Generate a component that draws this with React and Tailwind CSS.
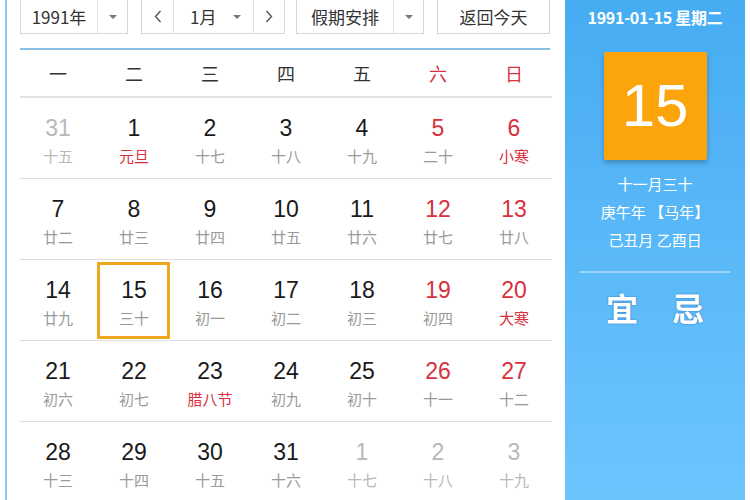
import React from "react";

const weekdays = ["一", "二", "三", "四", "五", "六", "日"];

// [day, lunar, kind] kind: o = other month, h = holiday (red lunar)
const weeks = [
  [["31", "十五", "o"], ["1", "元旦", "h"], ["2", "十七"], ["3", "十八"], ["4", "十九"], ["5", "二十"], ["6", "小寒", "h"]],
  [["7", "廿二"], ["8", "廿三"], ["9", "廿四"], ["10", "廿五"], ["11", "廿六"], ["12", "廿七"], ["13", "廿八"]],
  [["14", "廿九"], ["15", "三十", "s"], ["16", "初一"], ["17", "初二"], ["18", "初三"], ["19", "初四"], ["20", "大寒", "h"]],
  [["21", "初六"], ["22", "初七"], ["23", "腊八节", "h"], ["24", "初九"], ["25", "初十"], ["26", "十一"], ["27", "十二"]],
  [["28", "十三"], ["29", "十四"], ["30", "十五"], ["31", "十六"], ["1", "十七", "o"], ["2", "十八", "o"], ["3", "十九", "o"]],
];

const font = { fontFamily: '"Noto Sans CJK SC", "Liberation Sans", sans-serif' };

function Arrow() {
  return <span className="block w-0 h-0 border-x-[4px] border-x-transparent border-t-[4px] border-t-[#777]" />;
}

function Chevron({ right }) {
  return (
    <svg width="8" height="13" viewBox="0 0 8 13">
      <path d={right ? "M1.5 1 L6.5 6.5 L1.5 12" : "M6.5 1 L1.5 6.5 L6.5 12"} fill="none" stroke="#555" strokeWidth="1.4" />
    </svg>
  );
}

function Cell({ day, lunar, kind, col }) {
  const weekend = col >= 5;
  let numColor = weekend ? "text-[#d8303e]" : "text-[#1a1a1a]";
  if (kind === "o") numColor = "text-[#b8b8b8]";
  const lunarColor = kind === "h" ? "text-[#d8303e]" : kind === "o" ? "text-[#b8b8b8]" : "text-[#9a9a9a]";
  return (
    <div className="relative h-[80px] flex flex-col items-center pt-[17px]">
      {kind === "s" && (
        <div className="absolute left-[1px] right-[2px] top-[2px] bottom-[1px] border-[3px] border-[#f0a71e]" />
      )}
      <span className={`text-[23px] leading-[26px] ${numColor}`} style={{ fontFamily: '"Liberation Sans", Arial, sans-serif' }}>
        {day}
      </span>
      <span className={`mt-[4px] text-[15px] leading-[22px] ${lunarColor}`}>{lunar}</span>
    </div>
  );
}

export default function App() {
  return (
    <div className="w-[750px] h-[500px] overflow-hidden bg-white flex" style={font}>
      {/* Calendar */}
      <div className="w-[565px] h-full flex">
        <div className="ml-[5px] w-[2px] h-full bg-[#8fcbee]" />
        <div className="flex-1 pl-[13px] pr-[13px]">
          {/* Toolbar */}
          <div className="flex h-[34px] text-[17px] text-[#333]">
            <div className="w-[108px] flex border border-t-0 border-[#d6d6d6]">
              <div className="w-[76px] flex items-center justify-center">1991年</div>
              <div className="flex-1 flex items-center justify-center border-l border-[#e0e0e0]"><Arrow /></div>
            </div>
            <div className="ml-[13px] w-[144px] flex border border-t-0 border-[#d6d6d6]">
              <div className="w-[31px] flex items-center justify-center"><Chevron /></div>
              <div className="w-[81px] flex items-center justify-between pl-[16px] pr-[12px] border-x border-[#e0e0e0]">
                <span>1月</span>
                <Arrow />
              </div>
              <div className="flex-1 flex items-center justify-center"><Chevron right /></div>
            </div>
            <div className="ml-[11px] w-[128px] flex border border-t-0 border-[#d6d6d6]">
              <div className="w-[96px] flex items-center justify-center">假期安排</div>
              <div className="flex-1 flex items-center justify-center border-l border-[#e0e0e0]"><Arrow /></div>
            </div>
            <div className="ml-[13px] w-[113px] flex items-center justify-center border border-t-0 border-[#d6d6d6]">
              返回今天
            </div>
          </div>
          <div className="mt-[14px] w-[530px] h-[2px] bg-[#88bfe3]" />
          {/* Weekday header */}
          <div className="grid grid-cols-7 w-[532px] h-[48px] border-b-2 border-[#e3e3e3] text-[18px]">
            {weekdays.map((w, i) => (
              <div key={w} className={`flex items-center justify-center ${i >= 5 ? "text-[#d8303e]" : "text-[#333]"}`}>
                {w}
              </div>
            ))}
          </div>
          {/* Weeks */}
          {weeks.map((week, r) => (
            <div key={r} className="grid grid-cols-7 w-[532px] border-b border-[#dedede]">
              {week.map(([d, l, k], c) => (
                <Cell key={c} day={d} lunar={l} kind={k} col={c} />
              ))}
            </div>
          ))}
        </div>
      </div>

      {/* Right panel */}
      <div className="w-[180px] h-full bg-gradient-to-b from-[#46acf2] to-[#6dc5fe] flex flex-col items-center text-white">
        <div className="mt-[6px] text-[16px] leading-[22px] font-bold tracking-[-0.3px]">1991-01-15 星期二</div>
        <div className="mt-[24px] w-[103px] h-[108px] bg-[#fba40b] rounded-[2px] shadow-[0_3px_5px_rgba(0,0,0,0.25)] flex items-center justify-center">
          <span className="text-[60px] leading-none" style={{ fontFamily: '"Liberation Sans", Arial, sans-serif' }}>15</span>
        </div>
        <div className="mt-[10px] text-[15px] leading-[28px] text-center">
          <div>十一月三十</div>
          <div>庚午年 【马年】</div>
          <div>己丑月 乙酉日</div>
        </div>
        <div className="mt-[17px] w-[150px] h-[2px] bg-[#9ed6fb]" />
        <div className="mt-[12px] flex gap-[34px] text-[32px] leading-[44px] font-bold [text-shadow:0_0_2px_#2a6fb8]">
          <span>宜</span>
          <span>忌</span>
        </div>
      </div>
    </div>
  );
}
